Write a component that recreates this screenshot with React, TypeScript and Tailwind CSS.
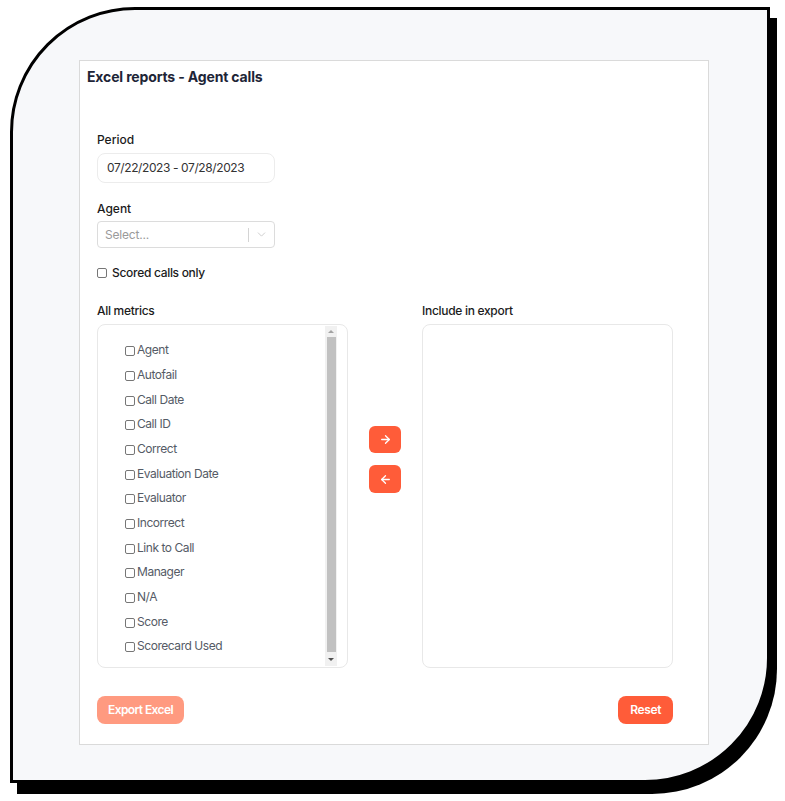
import { ArrowLeft, ArrowRight, ChevronDown } from 'lucide-react'

const metrics = [
  'Agent',
  'Autofail',
  'Call Date',
  'Call ID',
  'Correct',
  'Evaluation Date',
  'Evaluator',
  'Incorrect',
  'Link to Call',
  'Manager',
  'N/A',
  'Score',
  'Scorecard Used',
]

const font = { fontFamily: 'Inter, "Noto Sans", sans-serif' }

const Box = ({ className = '' }: { className?: string }) => (
  <span
    className={`inline-block h-[10px] w-[10px] shrink-0 rounded-[2px] border border-[#767676] bg-white ${className}`}
  />
)

const MetricList = () => (
  <div className="flex h-[344px] w-[251px] rounded-lg border border-[#e8e8e8] bg-white">
    <div className="flex-1 pl-[27px] pt-[13px]">
      {metrics.map((m) => (
        <div key={m} className="flex h-[24.67px] items-center gap-[2px]">
          <Box className="mt-[2px]" />
          <span className="text-[12px] tracking-[-0.45px] text-[#555b66]">{m}</span>
        </div>
      ))}
    </div>
    <div className="mr-[10px] mt-px mb-px flex w-[12px] flex-col items-center bg-[#f1f1f1]">
      <div className="flex h-[11px] items-center justify-center">
        <span className="h-0 w-0 border-x-[3px] border-b-[3px] border-x-transparent border-b-[#a3a3a3]" />
      </div>
      <div className="w-[9px] flex-1 bg-[#c1c1c1]" />
      <div className="flex h-[14px] items-center justify-center">
        <span className="h-0 w-0 border-x-[3px] border-t-[3px] border-x-transparent border-t-[#505050]" />
      </div>
    </div>
  </div>
)

export default function App() {
  return (
    <div className="h-[801px] w-[785px] bg-white pl-[10px] pt-[7px]" style={font}>
      <div className="h-[776px] w-[760px] rounded-tl-[125px] rounded-br-[125px] border-[3px] border-black bg-[#f7f8fa] pl-[66px] pt-[50px] shadow-[7px_11px_0_0_#000]">
        <div className="flex h-[685px] w-[630px] flex-col border border-[#dadada] bg-white">
          <h1 className="pl-[7px] pt-[6px] text-[14px] font-bold leading-[20px] tracking-[-0.15px] text-[#1e2537]">
            Excel reports - Agent calls
          </h1>

          <div className="flex flex-col pl-[17px] pr-[35px]">
            <label className="mt-[45px] text-[12px] font-medium leading-[16px] text-[#1b1b1b]">Period</label>
            <div className="mt-[5px] flex h-[30px] w-[178px] items-center rounded-lg border border-[#ececec] pl-[9px] text-[12px] tracking-[-0.4px] text-[#333]">
              07/22/2023 - 07/28/2023
            </div>

            <label className="mt-[18px] text-[12px] font-medium leading-[16px] text-[#1b1b1b]">Agent</label>
            <div className="mt-[4px] flex h-[27px] w-[178px] items-center rounded-[4px] border border-[#dcdcdc]">
              <span className="flex-1 pl-[7px] text-[12px] tracking-[-0.2px] text-[#9a9a9a]">Select...</span>
              <span className="h-[14px] w-px bg-[#d4d4d4]" />
              <span className="flex w-[25px] justify-center text-[#c4c4c4]">
                <ChevronDown size={13} strokeWidth={1.5} />
              </span>
            </div>

            <div className="mt-[17px] flex h-[16px] items-center gap-[5px]">
              <Box />
              <span className="text-[12px] font-medium tracking-[-0.3px] text-[#1b1b1b]">Scored calls only</span>
            </div>

            <div className="mt-[22px] flex">
              <div className="flex flex-col">
                <span className="text-[12px] font-medium leading-[16px] tracking-[-0.3px] text-[#1b1b1b]">All metrics</span>
                <div className="mt-[5px]">
                  <MetricList />
                </div>
              </div>
              <div className="flex w-[74px] flex-col items-center gap-[12px] pt-[123px]">
                <button className="flex h-[27px] w-[32px] items-center justify-center rounded-md bg-[#ff5c39] text-white">
                  <ArrowRight size={13} strokeWidth={2.4} />
                </button>
                <button className="flex h-[28px] w-[32px] items-center justify-center rounded-md bg-[#ff5c39] text-white">
                  <ArrowLeft size={13} strokeWidth={2.4} />
                </button>
              </div>
              <div className="flex flex-col">
                <span className="text-[12px] font-medium leading-[16px] tracking-[-0.3px] text-[#1b1b1b]">Include in export</span>
                <div className="mt-[5px] h-[344px] w-[251px] rounded-lg border border-[#e8e8e8] bg-white" />
              </div>
            </div>

            <div className="mt-[28px] flex items-center justify-between">
              <button className="h-[28px] rounded-lg bg-[#ff9a80] px-[11px] text-[12px] font-semibold tracking-[-0.6px] text-white">
                Export Excel
              </button>
              <button className="h-[28px] rounded-lg bg-[#ff5c39] px-[12px] text-[12px] font-semibold tracking-[-0.4px] text-white">
                Reset
              </button>
            </div>
          </div>
        </div>
      </div>
    </div>
  )
}
